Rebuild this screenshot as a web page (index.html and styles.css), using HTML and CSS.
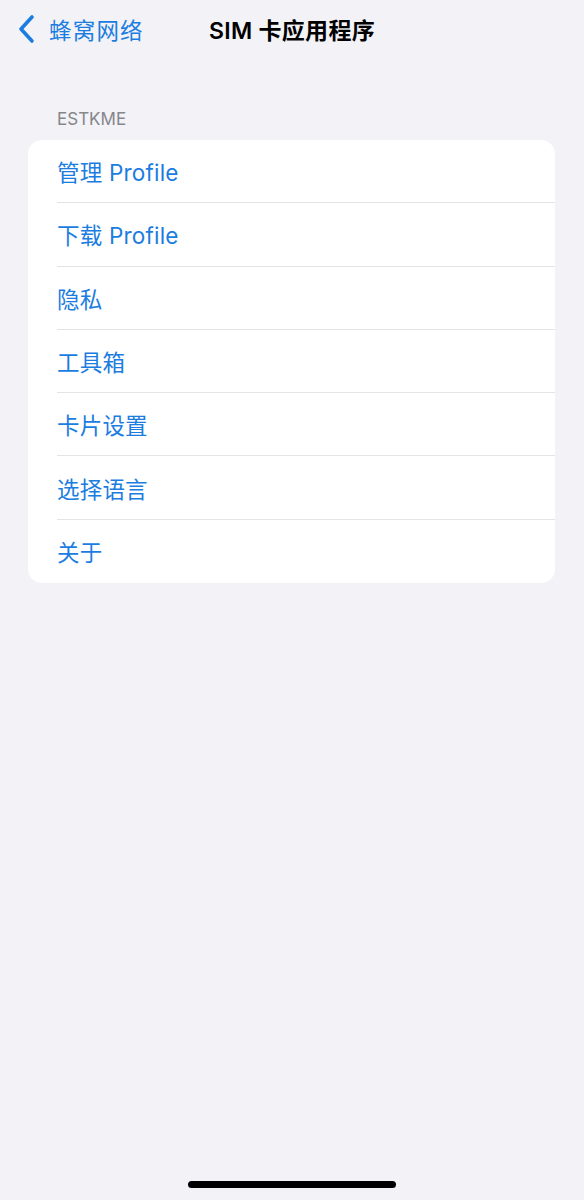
FILE: index.html
```html
<!DOCTYPE html>
<html lang="zh">
<head>
<meta charset="utf-8">
<link rel="stylesheet" href="styles.css">
</head>
<body>
<div class="screen">
  <header class="nav">
    <div class="back">
      <svg class="chev" width="18" height="30" viewBox="0 0 18 30"><path d="M14 3 L3 15 L14 27" fill="none" stroke="#1b7de0" stroke-width="3.6" stroke-linecap="round" stroke-linejoin="round"/></svg>
      <span class="back-label">蜂窝网络</span>
    </div>
    <div class="title">SIM 卡应用程序</div>
  </header>
  <div class="section-header">ESTKME</div>
  <div class="card">
    <div class="row"><span>管理 Profile</span></div>
    <div class="row"><span>下载 Profile</span></div>
    <div class="row"><span>隐私</span></div>
    <div class="row"><span>工具箱</span></div>
    <div class="row"><span>卡片设置</span></div>
    <div class="row"><span>选择语言</span></div>
    <div class="row last"><span>关于</span></div>
  </div>
  <div class="spacer"></div>
  <div class="home"></div>
</div>
</body>
</html>
```
FILE: styles.css
```css
html, body {
  margin: 0;
  padding: 0;
  background: #f2f2f7;
}
.screen {
  width: 584px;
  height: 1200px;
  display: flex;
  flex-direction: column;
  font-family: Inter, "Noto Sans CJK SC", sans-serif;
  position: relative;
}
.nav {
  height: 58px;
  margin-top: 0;
  position: relative;
  display: flex;
  align-items: center;
}
.back {
  display: flex;
  align-items: center;
  padding-left: 18px;
  gap: 13px;
  color: #1b7de0;
  font-size: 22.5px;
}
.back-label {
  letter-spacing: 1.2px;
}
.title {
  position: absolute;
  left: 0;
  right: 0;
  top: 0;
  height: 58px;
  display: flex;
  align-items: center;
  justify-content: center;
  font-size: 23px;
  font-weight: 600;
  color: #000;
  letter-spacing: 0.3px;
}
.section-header {
  margin-top: 50px;
  padding-left: 57px;
  font-size: 17px;
  color: #86868b;
  height: 32px;
  line-height: 22px;
}
.card {
  margin: 0 29px 0 28px;
  background: #fff;
  border-radius: 14px;
  overflow: hidden;
}
.row {
  height: 63.3px;
  box-sizing: border-box;
  margin-left: 29px;
  display: flex;
  align-items: center;
  border-bottom: 1.5px solid #e3e3e8;
  color: #1b7de0;
  font-size: 22.5px;
  letter-spacing: 0.2px;
}
.row.last {
  border-bottom: none;
}
.spacer {
  flex: 1;
}
.home {
  width: 208px;
  height: 7px;
  border-radius: 4px;
  background: #000;
  margin: 0 auto 12px;
}
```
